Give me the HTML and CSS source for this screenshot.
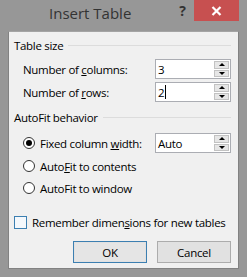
FILE: index.html
```html
<!DOCTYPE html>
<html>
<head>
    <title>Insert Table</title>
    <meta name="viewport" content="width=device-width, initial-scale=1.0">
    <link rel="stylesheet" href="styles.css">
</head>
<body>
    <div class="window">
        <div class="titlebar">
            <div class="title">Insert Table</div>
            <div class="help">?</div>
            <div class="close">
                <svg width="11" height="10" viewBox="0 0 11 10">
                    <path d="M1.5 1 L9.5 9 M9.5 1 L1.5 9" stroke="#fff" stroke-width="2.2"/>
                </svg>
            </div>
        </div>

        <div class="content">
            <div class="group-title"><span>Table size</span><div class="rule"></div></div>

            <div class="field first">
                <label><span>Number of <u>c</u>olumns:</span></label>
                <div class="spin">
                    <div class="value">3</div>
                    <div class="arrows"><div class="up"></div><div class="down"></div></div>
                </div>
            </div>
            <div class="field">
                <label><span>Number of <u>r</u>ows:</span></label>
                <div class="spin">
                    <div class="value">2<span class="caret"></span></div>
                    <div class="arrows"><div class="up"></div><div class="down"></div></div>
                </div>
            </div>

            <div class="group-title second"><span>AutoFit behavior</span><div class="rule"></div></div>

            <div class="field radio-field">
                <label><span class="radio checked"></span><span>Fixed column <u>w</u>idth:</span></label>
                <div class="spin">
                    <div class="value">Auto</div>
                    <div class="arrows"><div class="up"></div><div class="down"></div></div>
                </div>
            </div>
            <div class="option"><span class="radio"></span><span>Auto<u>F</u>it to contents</span></div>
            <div class="option"><span class="radio"></span><span>AutoFit to window</span></div>

            <div class="check-row"><span class="checkbox"></span><span>Remember dimen<u>s</u>ions for new tables</span></div>

            <div class="buttons">
                <div class="button default">OK</div>
                <div class="button">Cancel</div>
            </div>
        </div>
    </div>
</body>
</html>
```

FILE: styles.css
```css
* {
    margin: 0;
    padding: 0;
    box-sizing: border-box;
}

body {
    background: #fff;
    font-family: "Segoe UI", "Open Sans", "Noto Sans", sans-serif;
    font-size: 11.5px;
    letter-spacing: -0.3px;
    color: #000;
}

.window {
    width: 247px;
    height: 278px;
    background: #979797;
    padding: 0 8px 0 8px;
    border-bottom: 1px solid #fff;
}

.titlebar {
    height: 31px;
    display: flex;
}

.title {
    font-size: 15px;
    letter-spacing: 0;
    color: #333;
    padding: 3px 0 0 41px;
    width: 172px;
}

.help {
    font-size: 14px;
    font-weight: bold;
    color: #333;
    padding-top: 1px;
    width: 15px;
}

.close {
    width: 45px;
    height: 21px;
    background: #c75050;
    display: flex;
    align-items: center;
    justify-content: center;
}

.content {
    background: #f0f0f0;
    height: 238px;
    width: 231px;
    border: 1px solid #828282;
    border-top-color: #a4a4a4;
    padding: 0 7px 0 5px;
}

.group-title {
    display: flex;
    align-items: center;
    height: 17px;
    margin-top: 5px;
    gap: 5px;
}

.group-title.second {
    margin-top: 7px;
}

.rule {
    flex: 1;
    height: 1px;
    background: #dcdcdc;
}

.field {
    display: grid;
    grid-template-columns: 1fr 76px;
    align-items: center;
    height: 20px;
    margin-top: 3px;
}

.field.first {
    margin-top: 5px;
}

.field label {
    padding-left: 9px;
    display: flex;
    align-items: center;
}

.field.radio-field {
    margin-top: 7px;
}

.spin {
    height: 20px;
    border: 1px solid #abadb3;
    background: #fff;
    display: flex;
}

.value {
    flex: 1;
    padding-left: 2px;
    display: flex;
    align-items: center;
}

.caret {
    width: 1px;
    height: 14px;
    background: #000;
    margin-left: 1px;
}

.arrows {
    width: 16px;
    display: flex;
    flex-direction: column;
    gap: 1px;
    padding: 1px 1px 1px 0;
}

.arrows div {
    flex: 1;
    background: #e6e6e6;
    border: 1px solid #c2c2c2;
    display: flex;
    align-items: center;
    justify-content: center;
}

.arrows .up::after {
    content: "";
    border-left: 3px solid transparent;
    border-right: 3px solid transparent;
    border-bottom: 3px solid #000;
}

.arrows .down::after {
    content: "";
    border-left: 3px solid transparent;
    border-right: 3px solid transparent;
    border-top: 3px solid #000;
}

.radio {
    width: 12px;
    height: 12px;
    border-radius: 50%;
    border: 1px solid #333;
    background: #fff;
    margin-right: 5px;
    display: inline-flex;
    align-items: center;
    justify-content: center;
    flex-shrink: 0;
}

.radio.checked::after {
    content: "";
    width: 6px;
    height: 6px;
    border-radius: 50%;
    background: #000;
}

.option {
    display: flex;
    align-items: center;
    height: 18px;
    margin-top: 4px;
    padding-left: 9px;
}

.check-row {
    display: flex;
    align-items: center;
    height: 16px;
    margin-top: 17px;
    white-space: nowrap;
}

.checkbox {
    width: 13px;
    height: 13px;
    border: 1px solid #3c7fb1;
    background: #f4f8fc;
    margin-right: 5px;
    flex-shrink: 0;
}

.buttons {
    display: flex;
    justify-content: flex-end;
    gap: 10px;
    margin-top: 11px;
}

.button {
    width: 74px;
    height: 22px;
    border: 1px solid #acacac;
    background: #e1e1e1;
    display: flex;
    align-items: center;
    justify-content: center;
}

.button.default {
    border-color: #3c7fb1;
    box-shadow: inset 0 0 0 1px #e1e1e1;
    background: #e5e5e5;
}
```
